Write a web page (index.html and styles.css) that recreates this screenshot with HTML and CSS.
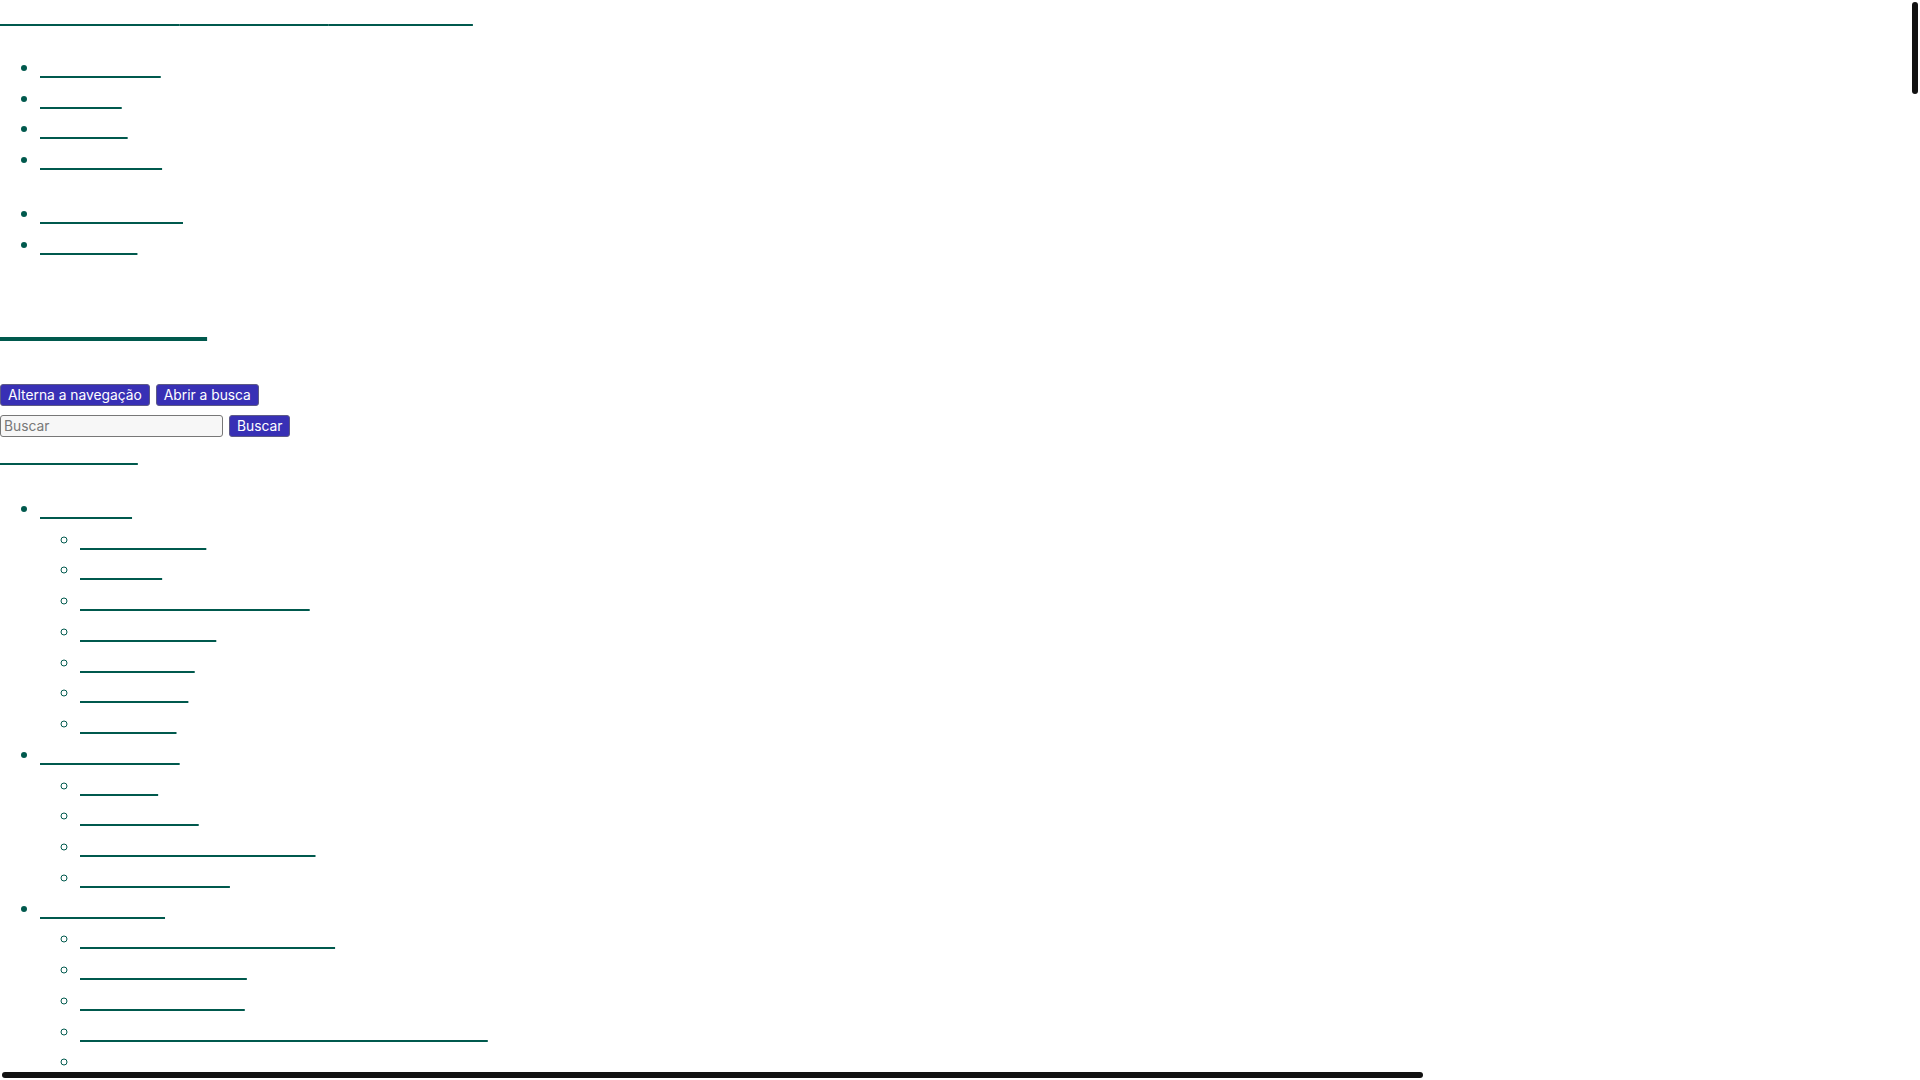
FILE: index.html
```html
<!DOCTYPE html>
<html lang="pt-BR">
<head>
<meta charset="utf-8">
<title>Portal</title>
<link rel="stylesheet" href="styles.css">
</head>
<body>
<div class="page">
  <div class="skip"><a href="#conteudo">Ir para o conteúdo 1</a><a href="#menu">Ir para o menu 2</a><a href="#rodape">Ir para o rodapé</a></div>

  <ul class="list list-top">
    <li><a href="#">Fale conosco</a></li>
    <li><a href="#">Contatos</a></li>
    <li><a href="#">Ouvidoria</a></li>
    <li><a href="#">Mapa do sítio</a></li>
  </ul>

  <ul class="list list-tools">
    <li><a href="#">Modo contraste</a></li>
    <li><a href="#">Legislação</a></li>
  </ul>

  <div class="brand"><a class="brand-link" href="#">Página inicial</a></div>

  <div class="controls">
    <button class="btn" type="button">Alterna a navegação</button>
    <button class="btn" type="button">Abrir a busca</button>
  </div>

  <form class="search" action="#">
    <input class="search-input" type="text" placeholder="Buscar">
    <button class="btn" type="submit">Buscar</button>
  </form>

  <div class="menu-title"><a href="#">Menu do portal</a></div>

  <ul class="list main">
    <li><a href="#">Sobre nós</a>
      <ul class="sub">
        <li><a href="#">Apresentação</a></li>
        <li><a href="#">Estrutura</a></li>
        <li><a href="#">Planejamento estratégico</a></li>
        <li><a href="#">Equipe gestora</a></li>
        <li><a href="#">Documentos</a></li>
        <li><a href="#">Localização</a></li>
        <li><a href="#">Endereços</a></li>
      </ul>
    </li>
    <li><a href="#">Pós-graduação</a>
      <ul class="sub">
        <li><a href="#">Ementas</a></li>
        <li><a href="#">Regulamento</a></li>
        <li><a href="#">Calendário das matrículas</a></li>
        <li><a href="#">Bolsas e auxílios</a></li>
      </ul>
    </li>
    <li><a href="#">Comunicação</a>
      <ul class="sub">
        <li><a href="#">Assessoria de comunicação</a></li>
        <li><a href="#">Notícias e eventos</a></li>
        <li><a href="#">Imprensa e mídias</a></li>
        <li><a href="#">Manual de identidade visual e usos da marca</a></li>
        <li><a href="#">Redes sociais</a></li>
      </ul>
    </li>
  </ul>
</div>

<div class="scroll-track scroll-track-v" aria-hidden="true"><div class="scroll-thumb scroll-thumb-v"></div></div>
<div class="scroll-track scroll-track-h" aria-hidden="true"><div class="scroll-thumb scroll-thumb-h"></div></div>
</body>
</html>
```

FILE: styles.css
```css
body {
  margin: 0;
  font-family: Inter, "Noto Sans", sans-serif;
  font-size: 19.2px;
  line-height: 30.75px;
  color: #00594d;
  background: #ffffff;
  overflow: hidden;
}

a {
  color: transparent;
  text-decoration: underline;
  text-decoration-color: #00594d;
  text-decoration-thickness: 2px;
  text-underline-offset: 2px;
  text-decoration-skip-ink: none;
}

.skip {
  height: 30.75px;
}

.list {
  margin: 0;
  padding: 0 0 0 40px;
  list-style: disc;
}

.list-top {
  margin-top: 21px;
}

.list-tools {
  margin-top: 23px;
  margin-bottom: 22px;
}

.sub {
  margin: 0;
  padding: 0 0 0 40px;
  list-style: circle;
}

.brand {
  font-size: 33.5px;
  line-height: 48px;
  padding: 18px 0 32.75px;
}

.brand-link {
  text-decoration-thickness: 3.5px;
  text-underline-offset: 2px;
}

.controls,
.search {
  margin: 0;
  box-sizing: border-box;
  display: flex;
  align-items: flex-start;
  gap: 6px;
  padding-top: 4px;
}

.controls {
  height: 31px;
}

.search {
  height: 27.5px;
}

.btn {
  font-family: Inter, "Noto Sans", sans-serif;
  font-size: 13.8px;
  line-height: 17px;
  height: 22px;
  box-sizing: border-box;
  padding: 1px 7px;
  color: #ffffff;
  background: #3830b5;
  border: 1px solid #5d5a86;
  border-radius: 3px;
}

.search-input {
  font-family: Inter, "Noto Sans", sans-serif;
  font-size: 13.8px;
  width: 223px;
  height: 22px;
  box-sizing: border-box;
  padding: 1px 3px;
  border: 1px solid #777777;
  border-radius: 3px;
  background: #f7f7f7;
  color: #222222;
}

.search-input::placeholder {
  color: #787878;
}

.menu-title {
  height: 29.75px;
}

.main {
  margin-top: 24.5px;
}

.scroll-track {
  position: fixed;
  background: #ffffff;
}

.scroll-track-v {
  top: 0;
  right: 0;
  width: 10px;
  height: 1070px;
}

.scroll-track-h {
  left: 0;
  bottom: 0;
  width: 1910px;
  height: 10px;
}

.scroll-thumb {
  position: absolute;
  background: #111111;
  border-radius: 3px;
}

.scroll-thumb-v {
  top: 2px;
  left: 2px;
  width: 6px;
  height: 92px;
}

.scroll-thumb-h {
  left: 2px;
  top: 2px;
  width: 1421px;
  height: 6px;
}
```
